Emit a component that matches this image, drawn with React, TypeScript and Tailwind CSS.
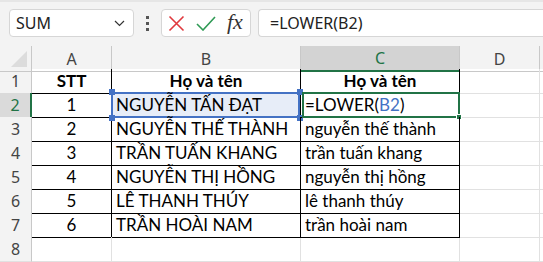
import React from 'react'

const rows = [
  { n: 1, a: 'STT', b: 'Họ và tên', c: 'Họ và tên', head: true },
  { n: 2, a: '1', b: 'NGUYỄN TẤN ĐẠT', c: '' },
  { n: 3, a: '2', b: 'NGUYỄN THẾ THÀNH', c: 'nguyễn thế thành' },
  { n: 4, a: '3', b: 'TRẦN TUẤN KHANG', c: 'trần tuấn khang' },
  { n: 5, a: '4', b: 'NGUYỄN THỊ HỒNG', c: 'nguyễn thị hồng' },
  { n: 6, a: '5', b: 'LÊ THANH THÚY', c: 'lê thanh thúy' },
  { n: 7, a: '6', b: 'TRẦN HOÀI NAM', c: 'trần hoài nam' },
]

const cols = 'grid grid-cols-[32px_80px_189px_159px_80px_1fr]'
const cellFont = "font-['Lato',sans-serif] text-[17px] leading-[22px] pt-[1px] text-black whitespace-nowrap"
const uiFont = "font-['Noto_Sans',sans-serif]"

function Handle({ cls }: { cls: string }) {
  return <div className={`absolute w-[6px] h-[6px] bg-[#4472c4] ${cls}`} />
}

export default function App() {
  return (
    <div className="w-[543px] h-[262px] overflow-hidden bg-white">
      {/* formula bar */}
      <div className="h-[46px] bg-[#f3f3f3] border-t-2 border-[#e6e6e6] flex items-start pt-[7px] pl-[9px]">
        <div className={`w-[125px] h-[28px] bg-white border border-[#d6d6d6] rounded-[4px] flex items-center justify-between pl-[6px] pr-[8px] ${uiFont} text-[16px] text-[#222]`}>
          <span>SUM</span>
          <svg width="11" height="7" viewBox="0 0 11 7" fill="none">
            <path d="M1 1l4.5 4.5L10 1" stroke="#333" strokeWidth="1.2" />
          </svg>
        </div>
        <div className="w-[27px] h-[28px] flex flex-col items-center justify-center gap-[3px]">
          <div className="w-[3px] h-[3px] bg-[#555]" />
          <div className="w-[3px] h-[3px] bg-[#555]" />
          <div className="w-[3px] h-[3px] bg-[#555]" />
        </div>
        <div className="w-[90px] h-[28px] bg-white border border-[#d6d6d6] rounded-[4px] flex items-center pl-[6px] gap-[11px]">
          <svg width="17" height="17" viewBox="0 0 17 17">
            <path d="M1.5 1.5l14 14M15.5 1.5l-14 14" stroke="#e0393e" strokeWidth="1.6" />
          </svg>
          <svg width="20" height="15" viewBox="0 0 20 15">
            <path d="M1 8l6 6L19 1" stroke="#2f9a55" strokeWidth="1.6" fill="none" />
          </svg>
          <span className="font-['Liberation_Serif',serif] italic text-[22px] text-[#333] leading-none -mt-[3px]">fx</span>
        </div>
        <div className={`ml-[7px] flex-1 h-[28px] bg-white border border-r-0 border-[#d6d6d6] rounded-l-[4px] flex items-center pl-[11px] ${uiFont} text-[16px] text-[#222]`}>
          =LOWER(B2)
        </div>
      </div>

      {/* column headers */}
      <div className={`${cols} h-[23px] bg-[#f3f3f3] ${uiFont} text-[16px] text-[#444]`}>
        <div className="border-r border-b border-[#c8c8c8] relative">
          <div className="absolute right-[4px] bottom-[4px] w-0 h-0 border-l-[16px] border-l-transparent border-b-[16px] border-b-[#dcdcdc]" />
        </div>
        <div className="border-r border-b border-[#c8c8c8] flex items-center justify-center">A</div>
        <div className="border-r border-b border-[#c8c8c8] flex items-center justify-center">B</div>
        <div className="border-r border-b-2 border-r-[#c8c8c8] border-b-[#217346] bg-[#d3d3d3] flex items-center justify-center text-[#217346]">C</div>
        <div className="border-r border-b border-[#c8c8c8] flex items-center justify-center">D</div>
        <div className="border-b border-[#c8c8c8]" />
      </div>

      {/* rows */}
      {rows.map((r) => (
        <div key={r.n} className={`${cols} h-[24px]`}>
          <div
            className={`${uiFont} text-[16px] flex items-center justify-center border-b border-[#e1e1e1] ${
              r.n === 2
                ? 'bg-[#dadada] text-[#217346] border-r-2 border-r-[#217346]'
                : 'bg-[#f3f3f3] text-[#444] border-r border-r-[#c8c8c8]'
            }`}
          >
            {r.n}
          </div>
          <div className={`${cellFont} ${r.head ? 'font-bold' : ''} border-r border-b border-black text-center`}>
            {r.a}
          </div>
          <div
            className={`${cellFont} ${r.head ? 'font-bold text-center' : 'pl-[4px]'} border-r border-b border-black relative ${
              r.n === 2 ? 'bg-[#e7edf8]' : ''
            }`}
          >
            {r.n === 2 && (
              <>
                <div className="absolute -left-[1px] -top-[1px] right-0 bottom-[-1px] border-2 border-[#4472c4]" />
                <Handle cls="-left-[3px] -top-[4px]" />
                <Handle cls="-right-[3px] -top-[4px]" />
                <Handle cls="-left-[3px] -bottom-[4px]" />
                <Handle cls="-right-[3px] -bottom-[4px]" />
              </>
            )}
            <span className="relative">{r.b}</span>
          </div>
          <div
            className={`${cellFont} ${r.head ? 'font-bold text-center' : 'pl-[4px]'} border-r border-b border-black relative`}
          >
            {r.n === 2 && (
              <>
                <div className="absolute left-[1px] -top-[1px] -right-[1px] bottom-[-1px] border-2 border-[#217346]" />
                <div className="absolute -right-[3px] -bottom-[3px] w-[6px] h-[6px] bg-[#217346] border border-white" />
                <span className="relative">
                  =LOWER(<span className="text-[#4472c4]">B2</span>)
                </span>
              </>
            )}
            {r.n !== 2 && r.c}
          </div>
          <div className="border-r border-b border-[#e1e1e1]" />
          <div className="border-b border-[#e1e1e1]" />
        </div>
      ))}
      <div className={`${cols} h-[24px]`}>
        <div className={`${uiFont} text-[16px] text-[#444] bg-[#f3f3f3] border-r border-[#c8c8c8] border-b border-b-[#e1e1e1] flex items-center justify-center`}>
          8
        </div>
        <div className="border-r border-b border-[#e1e1e1]" />
        <div className="border-r border-b border-[#e1e1e1]" />
        <div className="border-r border-b border-[#e1e1e1]" />
        <div className="border-r border-b border-[#e1e1e1]" />
        <div className="border-b border-[#e1e1e1]" />
      </div>
    </div>
  )
}
